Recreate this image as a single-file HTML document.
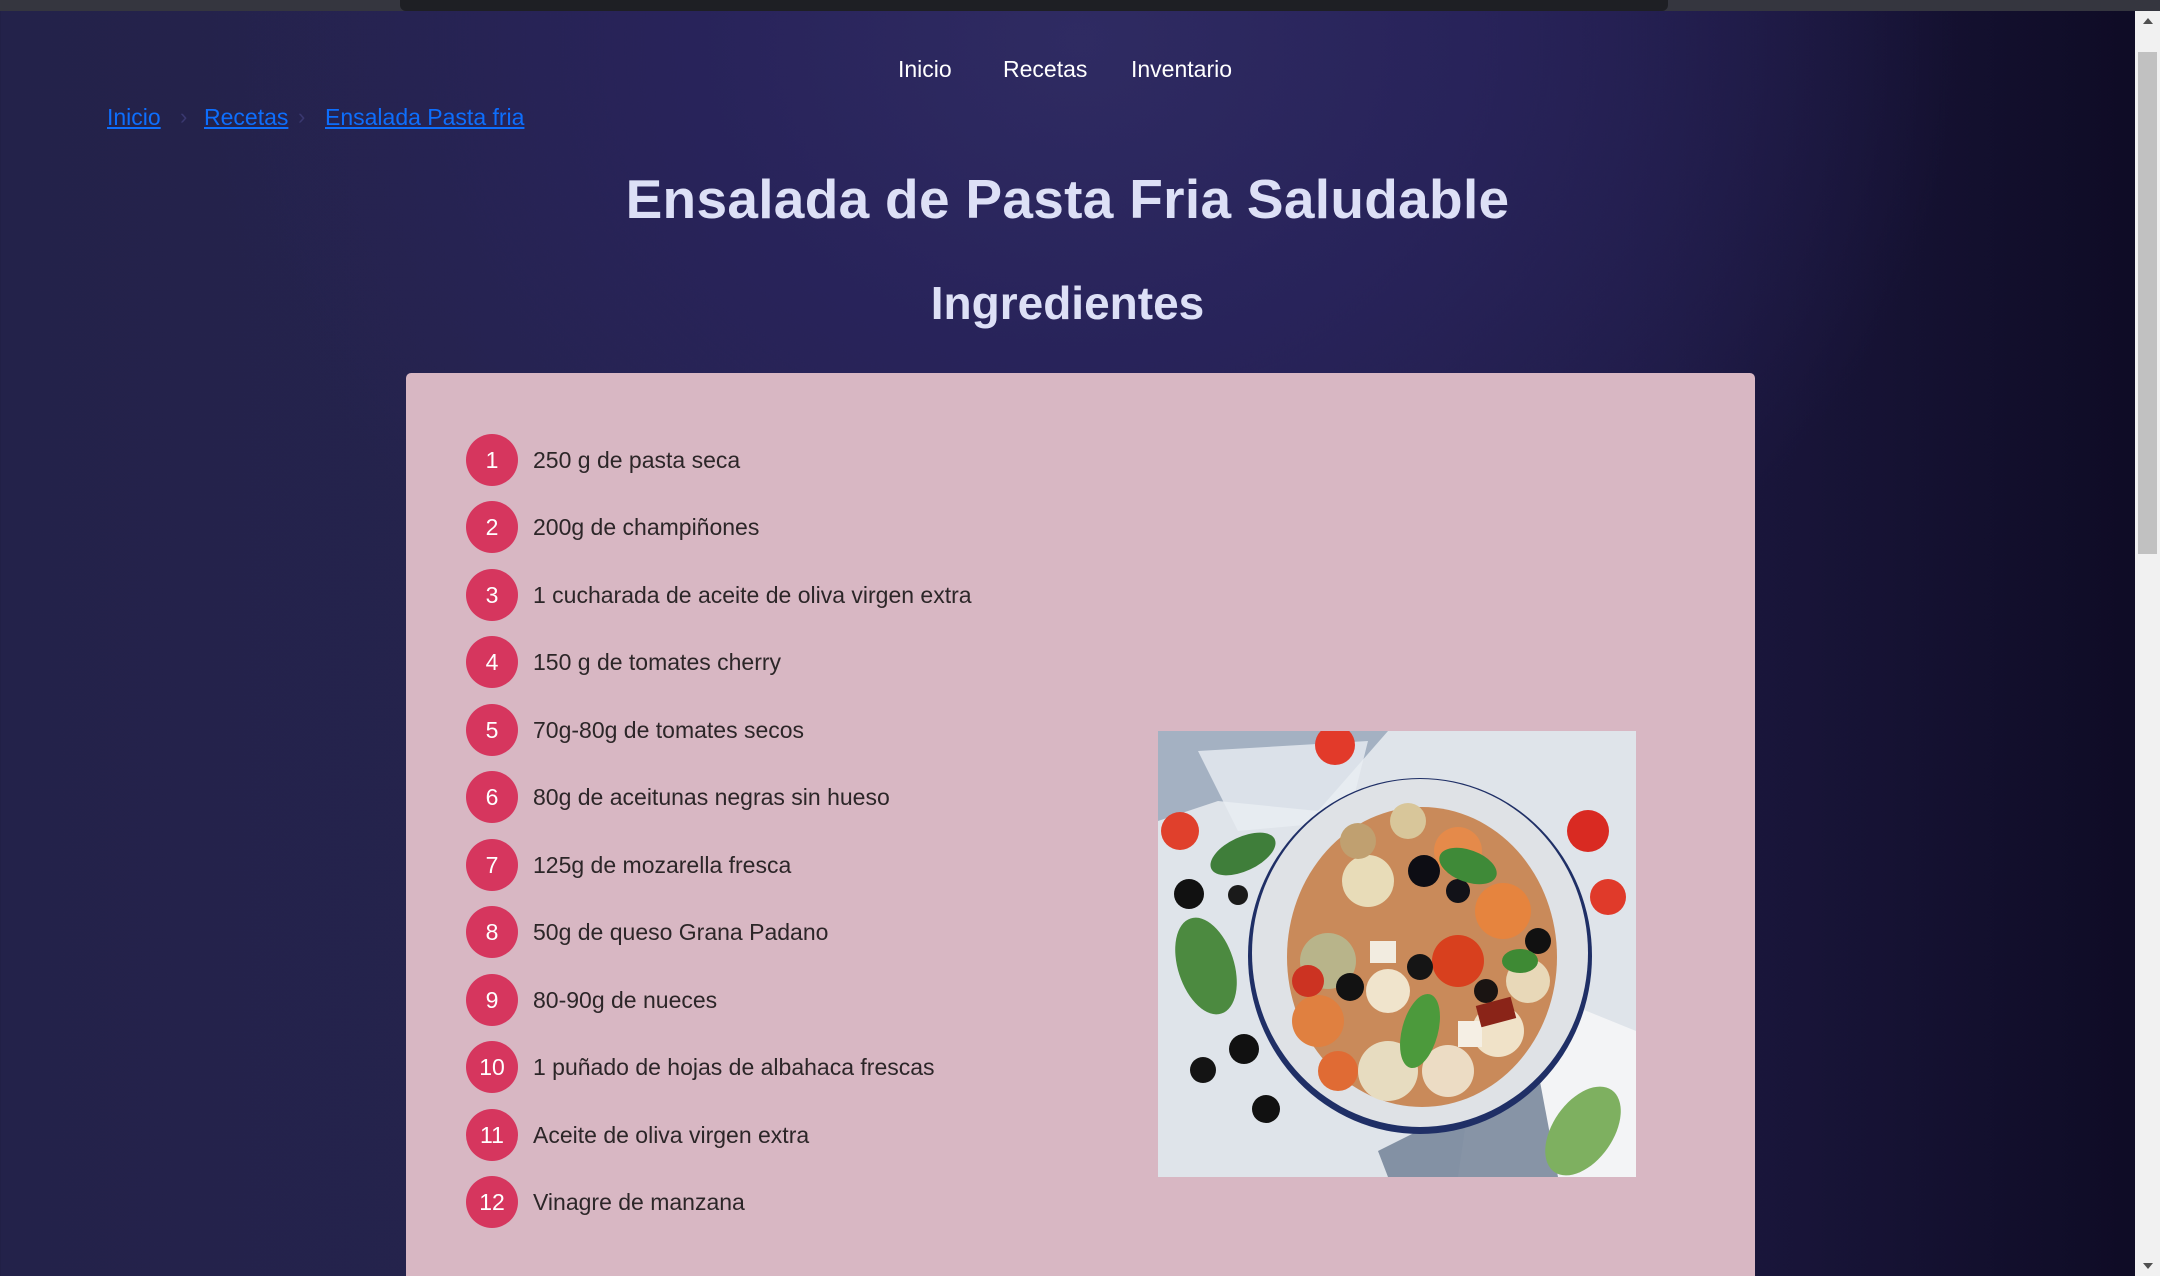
<!DOCTYPE html>
<html><head><meta charset="utf-8"><style>
*{margin:0;padding:0;box-sizing:border-box}
html,body{width:2160px;height:1276px;overflow:hidden}
body{position:relative;font-family:"Liberation Sans",sans-serif;
background:radial-gradient(ellipse 1100px 900px at 1080px 40px,#2f2b62 0%,#28235a 35%,rgba(30,27,70,0) 80%),linear-gradient(90deg,#23224a 0%,#27244f 45%,#1d1942 75%,#0e0b24 100%);}
.topbar{position:absolute;left:0;top:0;width:2160px;height:11px;background:#35363f}
.topbar i{position:absolute;left:400px;top:0;width:1268px;height:11px;background:#1e1f24;border-radius:0 0 6px 6px}
.sb{position:absolute;right:0;top:11px;width:25px;height:1265px;background:#f1f1f1}
.sb .th{position:absolute;left:3px;top:41px;width:19px;height:502px;background:#c1c1c1}
.sb .up,.sb .dn{position:absolute;left:8px;width:0;height:0;border-left:5px solid transparent;border-right:5px solid transparent}
.sb .up{top:7px;border-bottom:6px solid #505050}
.sb .dn{bottom:7px;border-top:6px solid #505050}
.nav{position:absolute;top:56px;font-size:23px;color:#fff}
.bc{position:absolute;top:104px;font-size:23px;color:#0d6efd;text-decoration:underline}
.sep{position:absolute;top:104px;font-size:22px;color:#3a3870}
h1{position:absolute;left:0;width:2135px;top:167px;text-align:center;font-size:55px;font-weight:bold;color:#dde0f6;letter-spacing:0.3px}
h2{position:absolute;left:0;width:2135px;top:276px;text-align:center;font-size:46px;font-weight:bold;color:#dde0f6}
.panel{position:absolute;left:406px;top:373px;width:1349px;height:920px;background:#d8b7c3;border-radius:5px}
.it{position:absolute;left:466px;height:52px;display:flex;align-items:center}
.c{width:52px;height:52px;border-radius:50%;background:#d6365e;color:#fff;font-size:23px;display:flex;align-items:center;justify-content:center}
.t{margin-left:15px;font-size:23px;color:#2c2628}
.img{position:absolute;left:1158px;top:731px;width:478px;height:446px}
</style></head><body>
<div class="topbar"><i></i></div>
<div class="sb"><div class="up"></div><div class="th"></div><div class="dn"></div></div>
<div class="nav" style="left:898px">Inicio</div>
<div class="nav" style="left:1003px">Recetas</div>
<div class="nav" style="left:1131px">Inventario</div>
<div class="bc" style="left:107px">Inicio</div>
<div class="sep" style="left:180px">›</div>
<div class="bc" style="left:204px">Recetas</div>
<div class="sep" style="left:298px">›</div>
<div class="bc" style="left:325px">Ensalada Pasta fria</div>
<h1>Ensalada de Pasta Fria Saludable</h1>
<h2>Ingredientes</h2>
<div class="panel"></div>
<div class="it" style="top:434px"><div class="c">1</div><div class="t">250 g de pasta seca</div></div>
<div class="it" style="top:501px"><div class="c">2</div><div class="t">200g de champiñones</div></div>
<div class="it" style="top:569px"><div class="c">3</div><div class="t">1 cucharada de aceite de oliva virgen extra</div></div>
<div class="it" style="top:636px"><div class="c">4</div><div class="t">150 g de tomates cherry</div></div>
<div class="it" style="top:704px"><div class="c">5</div><div class="t">70g-80g de tomates secos</div></div>
<div class="it" style="top:771px"><div class="c">6</div><div class="t">80g de aceitunas negras sin hueso</div></div>
<div class="it" style="top:839px"><div class="c">7</div><div class="t">125g de mozarella fresca</div></div>
<div class="it" style="top:906px"><div class="c">8</div><div class="t">50g de queso Grana Padano</div></div>
<div class="it" style="top:974px"><div class="c">9</div><div class="t">80-90g de nueces</div></div>
<div class="it" style="top:1041px"><div class="c">10</div><div class="t">1 puñado de hojas de albahaca frescas</div></div>
<div class="it" style="top:1109px"><div class="c">11</div><div class="t">Aceite de oliva virgen extra</div></div>
<div class="it" style="top:1176px"><div class="c">12</div><div class="t">Vinagre de manzana</div></div>
<svg class="img" viewBox="0 0 478 446">
<rect width="478" height="446" fill="#dfe4ea"/>
<path d="M0 0 L230 0 L160 80 L60 70 L0 90Z" fill="#8a9bb0" opacity=".7"/>
<path d="M40 20 L210 10 L190 90 L80 100Z" fill="#e9edf2" opacity=".8"/>
<path d="M330 240 L478 300 L478 446 L300 446 Z" fill="#f3f4f6"/>
<path d="M220 420 L380 340 L400 446 L230 446Z" fill="#6c7c92" opacity=".8"/>
<circle cx="22" cy="100" r="19" fill="#e0402c"/>
<circle cx="177" cy="14" r="20" fill="#e23a2a"/>
<circle cx="430" cy="100" r="21" fill="#d92a22"/>
<circle cx="450" cy="166" r="18" fill="#e03a2a"/>
<ellipse cx="85" cy="123" rx="35" ry="17" fill="#3f7e3a" transform="rotate(-25 85 123)"/>
<ellipse cx="48" cy="235" rx="28" ry="50" fill="#4c8a40" transform="rotate(-18 48 235)"/>
<ellipse cx="425" cy="400" rx="30" ry="50" fill="#7eb060" transform="rotate(35 425 400)"/>
<circle cx="31" cy="163" r="15" fill="#111"/>
<circle cx="80" cy="164" r="10" fill="#1a1a1a"/>
<circle cx="86" cy="318" r="15" fill="#111"/>
<circle cx="45" cy="339" r="13" fill="#141414"/>
<circle cx="108" cy="378" r="14" fill="#111"/>
<ellipse cx="262" cy="225" rx="172" ry="178" fill="#1f2f66"/>
<ellipse cx="262" cy="222" rx="168" ry="174" fill="#dfe2e6"/>
<ellipse cx="264" cy="226" rx="135" ry="150" fill="#c98a5a"/>
<g>
<circle cx="210" cy="150" r="26" fill="#e8dcb8"/><circle cx="300" cy="120" r="24" fill="#e58a4a"/>
<circle cx="345" cy="180" r="28" fill="#e6843e"/><circle cx="170" cy="230" r="28" fill="#b8b48a"/>
<circle cx="230" cy="260" r="22" fill="#f0e4cc"/><circle cx="300" cy="230" r="26" fill="#d8401e"/>
<circle cx="160" cy="290" r="26" fill="#e08040"/><circle cx="340" cy="300" r="26" fill="#f0e2c8"/>
<circle cx="230" cy="340" r="30" fill="#e7dcc0"/><circle cx="290" cy="340" r="26" fill="#ecdcc4"/>
<circle cx="200" cy="110" r="18" fill="#c0a070"/><circle cx="250" cy="90" r="18" fill="#d8c69a"/>
<circle cx="370" cy="250" r="22" fill="#e8d8b8"/><circle cx="180" cy="340" r="20" fill="#e06b34"/>
<circle cx="150" cy="250" r="16" fill="#cc3322"/>
</g>
<circle cx="266" cy="140" r="16" fill="#0d0d14"/><circle cx="300" cy="160" r="12" fill="#121218"/>
<circle cx="192" cy="256" r="14" fill="#121212"/><circle cx="262" cy="236" r="13" fill="#151515"/>
<circle cx="328" cy="260" r="12" fill="#1a1412"/><circle cx="380" cy="210" r="13" fill="#111"/>
<ellipse cx="310" cy="135" rx="30" ry="16" fill="#3f8a38" transform="rotate(20 310 135)"/>
<ellipse cx="262" cy="300" rx="18" ry="38" fill="#4c9a3c" transform="rotate(15 262 300)"/>
<ellipse cx="362" cy="230" rx="18" ry="12" fill="#3e8a34"/>
<rect x="212" y="210" width="26" height="22" fill="#f2ece0"/><rect x="300" y="290" width="24" height="26" fill="#f5efe4"/>
<rect x="320" y="270" width="36" height="22" fill="#8a2418" transform="rotate(-15 338 281)"/>
</svg>
</body></html>
